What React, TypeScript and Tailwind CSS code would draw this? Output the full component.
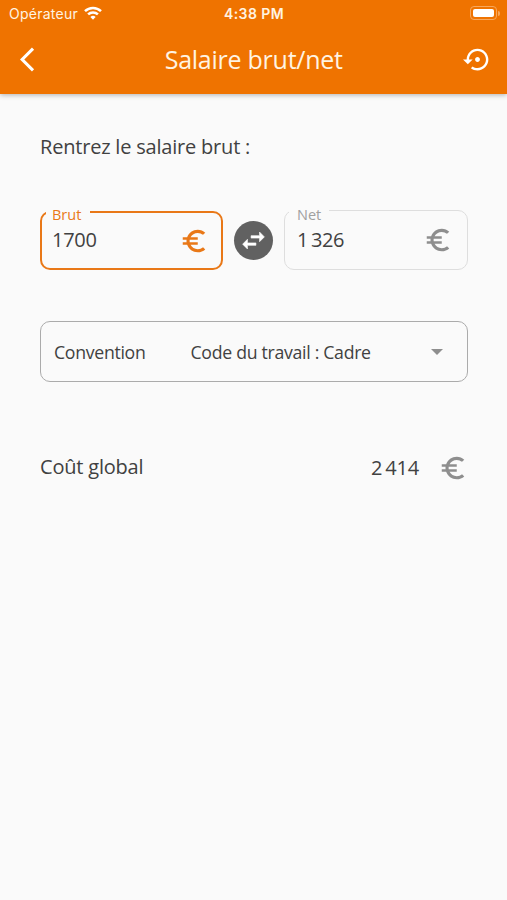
import React from "react";

type IconProps = { d: string; className: string };

function Icon({ d, className }: IconProps) {
  return (
    <svg viewBox="0 0 24 24" fill="currentColor" className={className}>
      <path d={d} />
    </svg>
  );
}

const BACK = "M11.67 3.87L9.9 2.1 0 12l9.9 9.9 1.77-1.77L3.54 12z";
const RESTORE =
  "M14 12c0-1.1-.9-2-2-2s-2 .9-2 2 .9 2 2 2 2-.9 2-2zm-2-9c-4.97 0-9 4.03-9 9H0l4 4 4-4H5c0-3.87 3.13-7 7-7s7 3.13 7 7-3.13 7-7 7c-1.51 0-2.91-.49-4.06-1.3l-1.42 1.44C8.04 20.3 9.94 21 12 21c4.97 0 9-4.03 9-9s-4.03-9-9-9z";
const EURO =
  "M15 18.5c-2.51 0-4.68-1.42-5.76-3.5H15v-2H8.58c-.05-.33-.08-.66-.08-1s.03-.67.08-1H15V9H9.24C10.32 6.92 12.5 5.5 15 5.5c1.61 0 3.09.59 4.23 1.57L21 5.3C19.41 3.87 17.3 3 15 3c-3.92 0-7.24 2.51-8.48 6H3v2h3.06c-.04.33-.06.66-.06 1s.02.67.06 1H3v2h3.52c1.24 3.49 4.56 6 8.48 6 2.31 0 4.41-.87 6-2.3l-1.78-1.77c-1.13.98-2.6 1.57-4.22 1.57z";
const SWAP =
  "M6.99 11L3 15l3.99 4v-3H14v-2H6.99v-3zM21 9l-3.99-4v3H10v2h7.01v3L21 9z";

function StatusBar() {
  return (
    <div className="grid h-7 grid-cols-3 items-center pl-[9px] pr-[8px] font-['Inter',sans-serif] text-[#fff3e2]">
      <div className="flex items-center gap-1.5">
        <span className="text-[14px] leading-7 tracking-[0.25px]">Opérateur</span>
        <svg viewBox="0 0 18 14" className="-mt-0.5 h-[14px] w-[18px]" fill="none" stroke="white" strokeWidth="2.5">
          <path d="M1 5.2a11.4 11.4 0 0 1 16 0" />
          <path d="M4.1 8.4a7 7 0 0 1 9.8 0" />
          <path d="M9 13.7L6.4 11a3.7 3.7 0 0 1 5.2 0z" fill="white" stroke="none" />
        </svg>
      </div>
      <span className="text-center text-[14px] font-semibold leading-7 tracking-[0.4px]">4:38 PM</span>
      <div className="-mr-[1px] -mt-[2px] flex items-center justify-end gap-px">
        <div className="h-[14px] w-[27px] rounded-[4px] border border-[#f7a75c] p-[2px]">
          <div className="h-full rounded-[2px] bg-white" />
        </div>
        <div className="h-[5px] w-[2px] rounded-r-full bg-[#f7a75c]" />
      </div>
    </div>
  );
}

export default function App() {
  return (
    <div className="flex h-[900px] w-[507px] flex-col bg-[#fafafa] font-['Open_Sans','Noto_Sans',sans-serif] text-[#414141]">
      <header className="h-[94px] bg-[#ef7300] shadow-[0_1px_5px_rgba(0,0,0,0.3)]">
        <StatusBar />
        <div className="flex h-[64px] items-center pl-[20px] pr-[15.5px] text-white">
          <Icon d={BACK} className="-mt-[1px] h-[29px] w-[29px]" />
          <h1 className="-mt-[2px] flex-1 pr-[4px] text-center text-[25px] leading-[32px] tracking-[-0.25px] text-[#fff3e2]">
            Salaire brut/net
          </h1>
          <Icon d={RESTORE} className="-mt-[1px] h-[29px] w-[29px]" />
        </div>
      </header>

      <main className="flex flex-col pl-10 pr-[39px] pt-[38px]">
        <p className="text-[20px] leading-[30px] tracking-[-0.2px]">Rentrez le salaire brut :</p>

        <div className="mt-[48px] flex h-[60px] items-center">
          <div className="relative mt-[1px] flex h-[59px] w-[183px] items-center justify-between rounded-[10px] border-2 border-[#e97817] pl-[10px] pr-[12px]">
            <span className="absolute -top-[8px] left-[4px] w-[44px] bg-[#fafafa] pl-[6px] text-[14.5px] leading-[20px] text-[#e97817]">
              Brut
            </span>
            <span className="-mt-[2px] text-[20px] tracking-[-0.3px]">1700</span>
            <Icon d={EURO} className="h-[30px] w-[30px] text-[#e97817]" />
          </div>
          <div className="ml-[11px] flex h-[39px] w-[39px] items-center justify-center rounded-full bg-[#616161] text-white">
            <Icon d={SWAP} className="h-[29px] w-[29px] stroke-white [stroke-width:0.5]" />
          </div>
          <div className="relative ml-[11px] flex h-[60px] w-[184px] items-center justify-between rounded-[10px] border border-[#dedede] pl-[12px] pr-[14px]">
            <span className="absolute -top-[6px] left-[4px] w-[40px] bg-[#fafafa] pl-[8px] text-[14.5px] leading-[20px] text-[#a0a0a0]">
              Net
            </span>
            <span className="text-[20px] tracking-[-0.4px]">1&#8198;326</span>
            <Icon d={EURO} className="h-[30px] w-[30px] text-[#8e8e8e]" />
          </div>
        </div>

        <div className="mt-[51px] flex h-[61px] items-center rounded-[10px] border-[1.5px] border-[#ababab] pl-[13px] pr-[24px] text-[17.7px] tracking-[-0.3px]">
          <span className="w-[136.5px] pt-[2px]">Convention</span>
          <span className="flex-1 pt-[2px]">Code du travail : Cadre</span>
          <svg viewBox="0 0 12 6" className="h-[6px] w-[12px] fill-[#8e8e8e]">
            <path d="M0 0h12L6 6z" />
          </svg>
        </div>

        <div className="mt-[71px] flex h-[30px] items-center text-[20px]">
          <span className="-mt-[2px] flex-1 tracking-[-0.2px]">Coût global</span>
          <span className="tracking-[-0.2px]">2&#8198;414</span>
          <Icon d={EURO} className="ml-[19px] h-[30px] w-[30px] text-[#8e8e8e]" />
        </div>
      </main>
    </div>
  );
}
